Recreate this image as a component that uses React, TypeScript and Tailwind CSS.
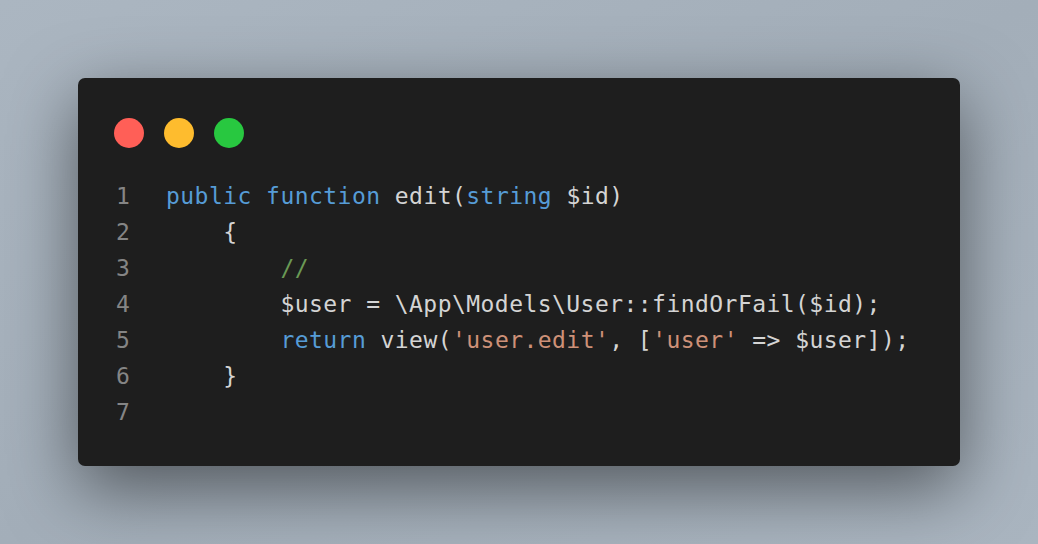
import React from "react";

const K = ({ children }: { children: React.ReactNode }) => <span className="text-[#569cd6]">{children}</span>;
const S = ({ children }: { children: React.ReactNode }) => <span className="text-[#ce9178]">{children}</span>;
const C = ({ children }: { children: React.ReactNode }) => <span className="text-[#6a9955]">{children}</span>;

const lines: React.ReactNode[] = [
  <>
    <K>public</K> <K>function</K> edit(<K>string</K> $id)
  </>,
  <>{"    {"}</>,
  <>
    {"        "}
    <C>//</C>
  </>,
  <>{"        $user = \\App\\Models\\User::findOrFail($id);"}</>,
  <>
    {"        "}
    <K>return</K> view(<S>'user.edit'</S>, [<S>'user'</S> =&gt; $user]);
  </>,
  <>{"    }"}</>,
  <>{""}</>,
];

export default function App() {
  return (
    <div className="w-[1038px] h-[544px] bg-gradient-to-br from-[#abb6c1] via-[#a3aeb9] to-[#aab5c0] flex items-start pt-[78px] pl-[78px]">
      <div className="w-[882px] h-[388px] bg-[#1e1e1e] rounded-[7px] shadow-[0_22px_70px_rgba(0,0,0,0.5)] pt-[40px] px-[36px] flex flex-col">
        <div className="flex gap-[20px] h-[30px]">
          <div className="w-[30px] h-[30px] rounded-full bg-[#ff5f57]" />
          <div className="w-[30px] h-[30px] rounded-full bg-[#febc2e]" />
          <div className="w-[30px] h-[30px] rounded-full bg-[#28c840]" />
        </div>
        <div
          className="mt-[30px] flex flex-col text-[23px] tracking-[0.45px] text-[#d4d4d4]"
          style={{ fontFamily: '"DejaVu Sans Mono", "Liberation Mono", monospace' }}
        >
          {lines.map((l, i) => (
            <div key={i} className="flex h-[36px] items-center">
              <div className="w-[50px] ml-[2px] text-[#858585]">{i + 1}</div>
              <div className="whitespace-pre">{l}</div>
            </div>
          ))}
        </div>
      </div>
    </div>
  );
}
